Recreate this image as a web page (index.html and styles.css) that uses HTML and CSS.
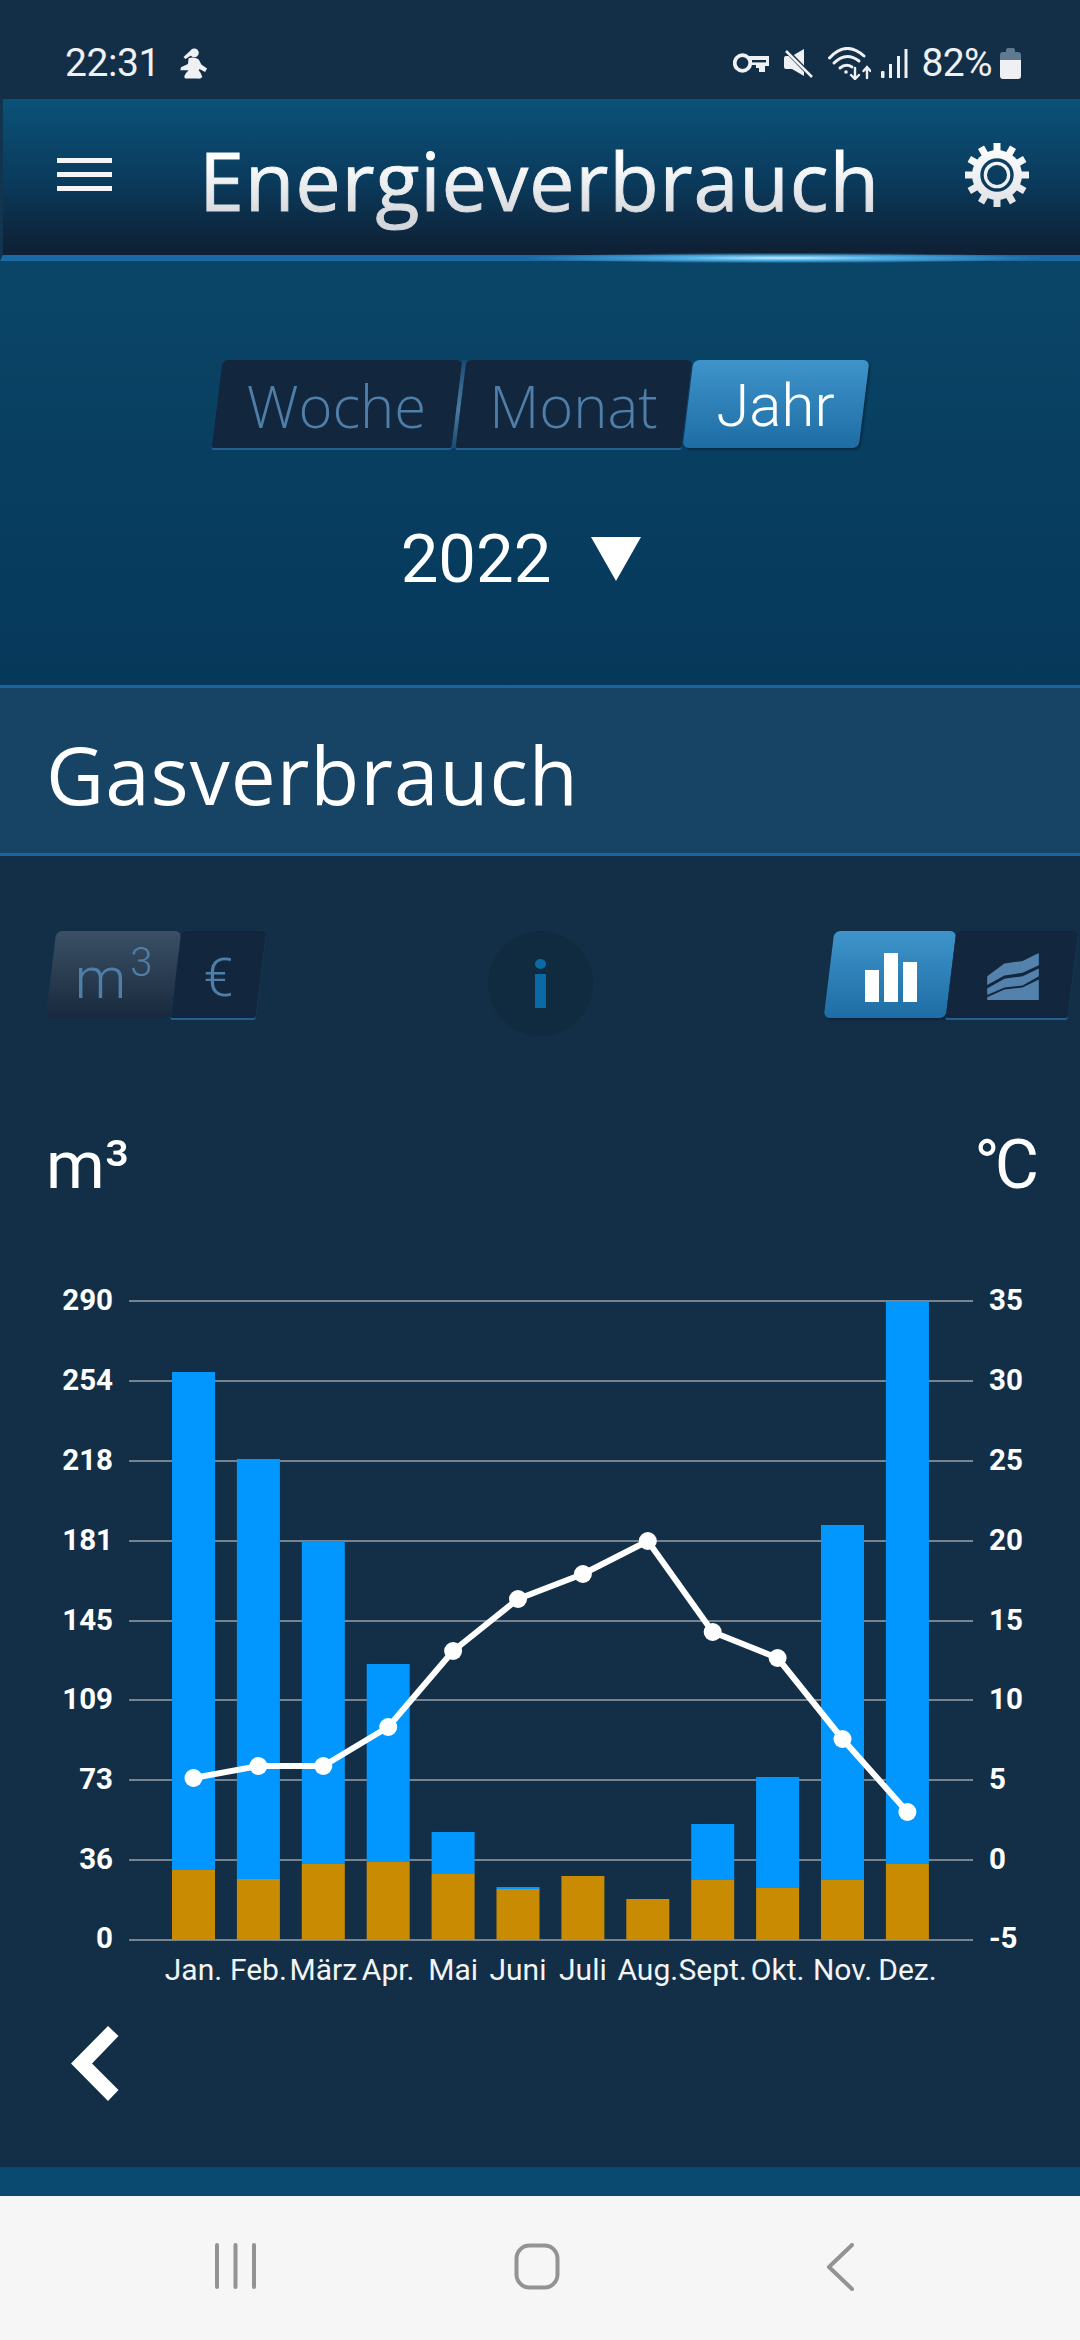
FILE: index.html
```html
<!DOCTYPE html>
<html lang="de">
<head>
<meta charset="utf-8">
<title>Energieverbrauch</title>
<link rel="stylesheet" href="styles.css">
</head>
<body>
<div class="screen">
  <div class="status">
    <div class="status-left">
      <span class="clock">22:31</span>
      <svg class="ic-person" viewBox="33 22 88 97" fill="#eef0f3"><circle cx="78" cy="37" r="14"/><path d="M68 28 44 50l6 6 20-12z"/><path d="M60 54q18-6 32 4l8 16 18 12-6 11-18-9-2 4q8 10 11 20-3 8-15 6H50q-8-4 2-18l8-8H34l2-10 22-10z"/></svg>
    </div>
    <div class="status-right">
      <svg class="ic-key" viewBox="0 0 36 20"><circle cx="9.500" cy="10" r="7.800" fill="none" stroke="#eef0f3" stroke-width="3.800"/><path d="M16 3h20v10h-4v6h-6v-4h-3v-3H16z" fill="#eef0f3"/><path d="M19 7h14v2.400H19z" fill="#132f47"/></svg>
      <svg class="ic-mute" viewBox="0 0 29 29"><path d="M0 9q0-2 2-2h6L20 0v27L8 20H2q-2 0-2-2z" fill="#eef0f3"/><path d="M1 0l27 28" stroke="#132f47" stroke-width="4.500"/><path d="M2 2l26 26" stroke="#eef0f3" stroke-width="2.500"/></svg>
      <svg class="ic-wifi" viewBox="0 0 43 33" fill="none" stroke="#eef0f3" stroke-width="3" stroke-linecap="round"><path d="M1.500 11Q18-7 36 9"/><path d="M6 16Q18 4 31 14"/><path d="M12 21q6-5 12-1"/><circle cx="18" cy="25" r="1.800" fill="#eef0f3" stroke="none"/><path d="M27 21v11m-4-4 4 4 4-4" stroke-width="2.400"/><path d="M39 31V20m-3.500 4 3.500-4 3.500 4" stroke-width="2.400"/></svg>
      <svg class="ic-signal" viewBox="0 0 27 29" fill="#eef0f3"><rect x="0" y="22" width="3.500" height="7" rx="1"/><rect x="8" y="15" width="3" height="14"/><rect x="16" y="7" width="3" height="22"/><rect x="23.500" y="0" width="3" height="29"/></svg>
      <span class="battery-text">82%</span>
      <svg class="ic-battery" viewBox="0 0 21 31"><path d="M6 2q0-2 2-2h5q2 0 2 2v2h3q3 0 3 3v5H0V7q0-3 3-3h3z" fill="#5f7a8f"/><path d="M0 12h21v16q0 3-3 3H3q-3 0-3-3z" fill="#eef0f3"/></svg>
    </div>
  </div>

  <header class="header">
    <div class="menu"><span></span><span></span><span></span></div>
    <h1 class="title">Energieverbrauch</h1>
    <svg class="gear" viewBox="0 0 66 66">
      <defs>
        <linearGradient id="gearFill" x1="0" y1="0" x2="0" y2="1"><stop offset="0" stop-color="#ffffff"/><stop offset="1" stop-color="#dfe2e6"/></linearGradient>
        <mask id="gearMask">
          <g fill="#fff">
            <rect x="29.500" y="1" width="7" height="12"/><rect x="29.500" y="1" width="7" height="12" transform="rotate(30 33 33)"/><rect x="29.500" y="1" width="7" height="12" transform="rotate(60 33 33)"/><rect x="29.500" y="1" width="7" height="12" transform="rotate(90 33 33)"/><rect x="29.500" y="1" width="7" height="12" transform="rotate(120 33 33)"/><rect x="29.500" y="1" width="7" height="12" transform="rotate(150 33 33)"/><rect x="29.500" y="1" width="7" height="12" transform="rotate(180 33 33)"/><rect x="29.500" y="1" width="7" height="12" transform="rotate(210 33 33)"/><rect x="29.500" y="1" width="7" height="12" transform="rotate(240 33 33)"/><rect x="29.500" y="1" width="7" height="12" transform="rotate(270 33 33)"/><rect x="29.500" y="1" width="7" height="12" transform="rotate(300 33 33)"/><rect x="29.500" y="1" width="7" height="12" transform="rotate(330 33 33)"/>
          </g>
          <circle cx="33" cy="33" r="25" fill="#fff"/>
          <circle cx="33" cy="33" r="16.700" fill="#000"/>
          <circle cx="33" cy="33" r="13.300" fill="#fff"/>
          <circle cx="33" cy="33" r="10" fill="#000"/>
        </mask>
      </defs>
      <rect width="66" height="66" fill="url(#gearFill)" mask="url(#gearMask)"/>
    </svg>
    <div class="glow"></div>
  </header>

  <section class="period">
    <div class="tabs">
      <div class="tab tab-woche">Woche</div>
      <div class="tab tab-monat">Monat</div>
      <div class="tab tab-jahr active">Jahr</div>
    </div>
    <div class="year">
      <span class="year-value">2022</span>
      <svg class="year-arrow" viewBox="0 0 50 44"><path d="M0 0h50L25 44z" fill="#fff"/></svg>
    </div>
  </section>

  <section class="section-head">
    <h2 class="section-title">Gasverbrauch</h2>
  </section>

  <main class="main">
    <div class="controls">
      <div class="toggle">
        <div class="tab tab-m selected">m<sup class="sup">3</sup></div>
        <div class="tab tab-e">€</div>
      </div>
      <div class="info"><span class="info-dot"></span><span class="info-stem"></span></div>
      <div class="toggle toggle-chart">
        <div class="tab tab-chart active">
          <svg class="ic-bars" viewBox="0 0 52 49" fill="#fff"><rect x="0" y="17" width="14" height="32"/><rect x="19" y="0" width="14" height="49"/><rect x="38" y="9" width="14" height="40"/></svg>
        </div>
        <div class="tab tab-chart">
          <svg class="ic-area" viewBox="618 158 156 142" fill="#5482ac"><path d="M618 228 670 190 725 182 774 158V195L725 218 670 226 618 255Z"/><path d="M618 265 670 236 725 228 774 205V228L725 256 670 262 618 285Z"/><path d="M618 292 670 268 725 262 774 238V300H618Z"/></svg>
        </div>
      </div>
    </div>

    <div class="units">
      <span class="unit">m³</span>
      <span class="unit unit-c">°C</span>
    </div>

    <svg class="chart" viewBox="0 1280 1080 720">
      <g class="grid">
        <path d="M129 1301H973"/><path d="M129 1381H973"/><path d="M129 1461H973"/><path d="M129 1541H973"/><path d="M129 1621H973"/><path d="M129 1700H973"/><path d="M129 1780H973"/><path d="M129 1860H973"/><path d="M129 1940H973"/>
      </g>
      <g class="axis axis-left">
        <text x="113" y="1310">290</text><text x="113" y="1390">254</text><text x="113" y="1470">218</text><text x="113" y="1550">181</text><text x="113" y="1630">145</text><text x="113" y="1709">109</text><text x="113" y="1789">73</text><text x="113" y="1869">36</text><text x="113" y="1948">0</text>
      </g>
      <g class="axis axis-right">
        <text x="989" y="1310">35</text><text x="989" y="1390">30</text><text x="989" y="1470">25</text><text x="989" y="1550">20</text><text x="989" y="1630">15</text><text x="989" y="1709">10</text><text x="989" y="1789">5</text><text x="989" y="1869">0</text><text x="989" y="1948">-5</text>
      </g>
      <g class="bars-gas">
        <rect x="172" y="1372" width="43" height="498"/>
        <rect x="236.900" y="1459" width="43" height="420"/>
        <rect x="301.800" y="1541" width="43" height="323"/>
        <rect x="366.700" y="1664" width="43" height="198"/>
        <rect x="431.600" y="1832" width="43" height="42"/>
        <rect x="496.500" y="1887" width="43" height="2"/>
        <rect x="691.200" y="1824" width="43" height="56"/>
        <rect x="756.100" y="1777" width="43" height="111"/>
        <rect x="821" y="1525" width="43" height="355"/>
        <rect x="885.900" y="1302" width="43" height="562"/>
      </g>
      <g class="bars-water">
        <rect x="172" y="1870" width="43" height="70"/>
        <rect x="236.900" y="1879" width="43" height="61"/>
        <rect x="301.800" y="1864" width="43" height="76"/>
        <rect x="366.700" y="1862" width="43" height="78"/>
        <rect x="431.600" y="1874" width="43" height="66"/>
        <rect x="496.500" y="1889" width="43" height="51"/>
        <rect x="561.400" y="1876" width="43" height="64"/>
        <rect x="626.300" y="1899" width="43" height="41"/>
        <rect x="691.200" y="1880" width="43" height="60"/>
        <rect x="756.100" y="1888" width="43" height="52"/>
        <rect x="821" y="1880" width="43" height="60"/>
        <rect x="885.900" y="1864" width="43" height="76"/>
      </g>
      <polyline class="temp-line" points="193.500,1778 258.400,1766 323.300,1766 388.200,1727 453.100,1651 518,1599 582.900,1574 647.800,1541 712.700,1632 777.600,1658 842.500,1739 907.400,1812"/>
      <g class="temp-dots">
        <circle cx="193.500" cy="1778" r="9"/><circle cx="258.400" cy="1766" r="9"/><circle cx="323.300" cy="1766" r="9"/><circle cx="388.200" cy="1727" r="9"/><circle cx="453.100" cy="1651" r="9"/><circle cx="518" cy="1599" r="9"/><circle cx="582.900" cy="1574" r="9"/><circle cx="647.800" cy="1541" r="9"/><circle cx="712.700" cy="1632" r="9"/><circle cx="777.600" cy="1658" r="9"/><circle cx="842.500" cy="1739" r="9"/><circle cx="907.400" cy="1812" r="9"/>
      </g>
      <g class="months">
        <text x="193.500" y="1980">Jan.</text><text x="258.400" y="1980">Feb.</text><text x="323.300" y="1980">März</text><text x="388.200" y="1980">Apr.</text><text x="453.100" y="1980">Mai</text><text x="518" y="1980">Juni</text><text x="582.900" y="1980">Juli</text><text x="647.800" y="1980">Aug.</text><text x="712.700" y="1980">Sept.</text><text x="777.600" y="1980">Okt.</text><text x="842.500" y="1980">Nov.</text><text x="907.400" y="1980">Dez.</text>
      </g>
    </svg>

    <svg class="back" viewBox="0 0 48 75"><path d="M37 0 47.500 10 21 37.500 47.500 64 37 75 0 37.500z" fill="#fff"/></svg>
  </main>

  <div class="strip"></div>

  <nav class="nav">
    <svg class="nav-recent" viewBox="0 0 43 46"><path d="M3 2v42M21.500 2v42M40 2v42"/></svg>
    <svg class="nav-home" viewBox="0 0 46 47"><rect x="2.500" y="2.500" width="41" height="42" rx="13"/></svg>
    <svg class="nav-back" viewBox="0 0 28 48"><path d="M26 2 3 24l23 22"/></svg>
  </nav>
</div>
</body>
</html>
```
FILE: styles.css
```css
* { box-sizing: border-box; }
html, body { margin: 0; padding: 0; background: #132f47; }
body { font-family: Roboto, "Liberation Sans", sans-serif; color: #fff; }
.screen { width: 1080px; height: 2340px; display: flex; flex-direction: column; overflow: hidden; }

/* status bar */
.status { height: 99px; flex: none; display: flex; justify-content: space-between; align-items: center; padding: 0 59px 0 65px; background: #132f47; color: #eef0f3; }
.status-left, .status-right { display: flex; align-items: center; padding-top: 27px; }
.clock { font-size: 39px; line-height: 40px; letter-spacing: -0.4px; }
.ic-person { width: 28px; height: 31px; margin-left: 20px; }
.ic-key { width: 36px; height: 20px; }
.ic-mute { width: 29px; height: 29px; margin-left: 15px; }
.ic-wifi { width: 43px; height: 33px; margin-left: 15px; }
.ic-signal { width: 27px; height: 29px; margin-left: 10px; }
.battery-text { font-size: 39px; line-height: 40px; margin-left: 13px; letter-spacing: -0.6px; }
.ic-battery { width: 21px; height: 31px; margin-left: 8px; }

/* header */
.header { position: relative; height: 162px; flex: none; display: flex; align-items: center; padding: 0 50px 6px 57px; background: linear-gradient(#0b5279 0, #0a3c5e 50%, #0e2136 96%); border-left: 3px solid #11354f; border-bottom: 6px solid #1a6aa6; }
.menu { width: 55px; margin-left: -3px; display: flex; flex-direction: column; gap: 9px; flex: none; }
.menu span { display: block; height: 5px; background: #f3f5f7; }
.title { margin: 24px 0 0 87px; padding-bottom: 14px; font-family: "Open Sans", Roboto, sans-serif; font-size: 81px; line-height: 1; font-weight: 400; letter-spacing: 0.8px; -webkit-text-stroke: 1px transparent; background: linear-gradient(#ffffff 20%, #d3d6da 85%); -webkit-background-clip: text; background-clip: text; color: transparent; white-space: nowrap; }
.gear { width: 66px; height: 66px; margin: 2px 0 0 auto; flex: none; }
.glow { position: absolute; left: 520px; bottom: -12px; width: 520px; height: 18px; background: radial-gradient(ellipse 50% 30% at center, #c8eeff 0, #4fb0e4 40%, rgba(26, 106, 166, 0) 100%); }

/* period selector */
.period { height: 424px; flex: none; display: flex; flex-direction: column; align-items: center; padding-top: 99px; background: linear-gradient(#0a4567, #06385a); }
.tabs { display: flex; height: 90px; }
.tab { position: relative; z-index: 0; display: flex; align-items: center; justify-content: center; flex: none; color: #4f7ea8; }
.tab::before { content: ""; position: absolute; inset: 0 0 2px 0; z-index: -1; background: #12273e; border-radius: 6px 6px 2px 2px; transform: skewX(-7deg); box-shadow: 0 2px 0 #24608e; }
.tab.active { color: #fff; }
.tab.active::before { background: linear-gradient(#3e94ca, #1e6da5); border-radius: 6px; box-shadow: 2px 2px 2px rgba(8, 24, 40, 0.5); }
.tab-woche, .tab-monat { font-family: "Open Sans", Roboto, sans-serif; font-size: 58px; font-weight: 300; }
.tab-jahr { font-family: Roboto, sans-serif; font-size: 60px; font-weight: 300; }
.tab-woche { width: 240px; margin-right: 4px; }
.tab-woche::after { content: ""; position: absolute; right: -4px; top: 0; bottom: 2px; width: 4px; background: linear-gradient(#1c4a70, #4a7ca3 55%, #1c4a70); transform: skewX(-7deg); }
.tab-monat { width: 226px; margin-right: 1px; }
.tab-jahr { width: 176px; }

.year { display: flex; align-items: center; margin: 74px 38px 0 0; gap: 40px; }
.year-value { font-size: 67px; line-height: 70px; font-weight: 400; }
.year-arrow { width: 50px; height: 44px; }

/* section head */
.section-head { height: 171px; flex: none; display: flex; align-items: center; padding-left: 46px; background: #174464; border-top: 3px solid #1a659f; border-bottom: 3px solid #1a659f; }
.section-title { margin: 6px 0 0; font-family: "Open Sans", Roboto, sans-serif; font-size: 80px; line-height: 1; font-weight: 400; letter-spacing: 1px; white-space: nowrap; }

/* main content */
.main { flex: 1; display: flex; flex-direction: column; background: #132f47; }
.controls { display: flex; align-items: flex-start; margin-top: 75px; padding: 0 7px 0 51px; height: 105px; }
.toggle { display: flex; height: 89px; }
.tab-m { width: 125px; font-size: 58px; font-weight: 300; padding-top: 4px; }
.tab-m.selected::before { background: linear-gradient(#3b5065, #18293d); box-shadow: none; border-radius: 6px; }
.sup { font-size: 40px; line-height: 1; align-self: flex-start; margin: 8px 0 0 4px; }
.tab-e { width: 85px; font-size: 54px; font-weight: 300; padding-top: 4px; }
.info { width: 105px; height: 105px; margin-left: 227px; flex: none; border-radius: 50%; background: #102a40; display: flex; flex-direction: column; align-items: center; padding-top: 28px; gap: 5px; }
.info-dot { width: 11px; height: 10px; border-radius: 50%; background: #0a6aa5; }
.info-stem { width: 11px; height: 34px; background: #0a6aa5; }
.toggle-chart { margin-left: auto; }
.tab-chart { width: 122px; }
.ic-bars { width: 52px; height: 49px; margin: 4px 0 0 2px; }
.ic-area { width: 52px; height: 47px; margin: 2px 0 0 2px; }

.units { display: flex; justify-content: space-between; padding: 0 46px; margin-top: 89px; height: 80px; }
.unit { font-size: 67px; line-height: 80px; font-weight: 400; }
.unit-c { font-size: 68px; letter-spacing: -5px; }

.chart { display: block; width: 1080px; height: 720px; margin-top: 75px; flex: none; }
.grid path { stroke: #77848f; stroke-width: 2; fill: none; }
.axis text { font-size: 29.500px; font-weight: 700; fill: #fff; }
.axis-left text { text-anchor: end; }
.axis-right text { text-anchor: start; }
.bars-gas rect { fill: #0297fe; }
.bars-water rect { fill: #c88b02; }
.temp-line { fill: none; stroke: #fff; stroke-width: 6; stroke-linejoin: round; }
.temp-dots circle { fill: #fff; }
.months text { font-size: 30px; fill: #f2f4f6; text-anchor: middle; }
.back { width: 48px; height: 75px; margin: 26px 0 0 71px; flex: none; }

.strip { height: 29px; flex: none; background: #0a4a70; }

/* system nav */
.nav { height: 144px; flex: none; display: flex; align-items: flex-start; padding: 47px 0 0 214px; background: #f6f6f6; }
.nav svg { fill: none; stroke: #939393; stroke-linecap: round; stroke-linejoin: round; stroke-width: 4; flex: none; }
.nav-recent { width: 43px; height: 46px; }
.nav-home { width: 46px; height: 47px; margin-left: 257px; }
.nav-back { width: 28px; height: 48px; margin-left: 266px; }
```
